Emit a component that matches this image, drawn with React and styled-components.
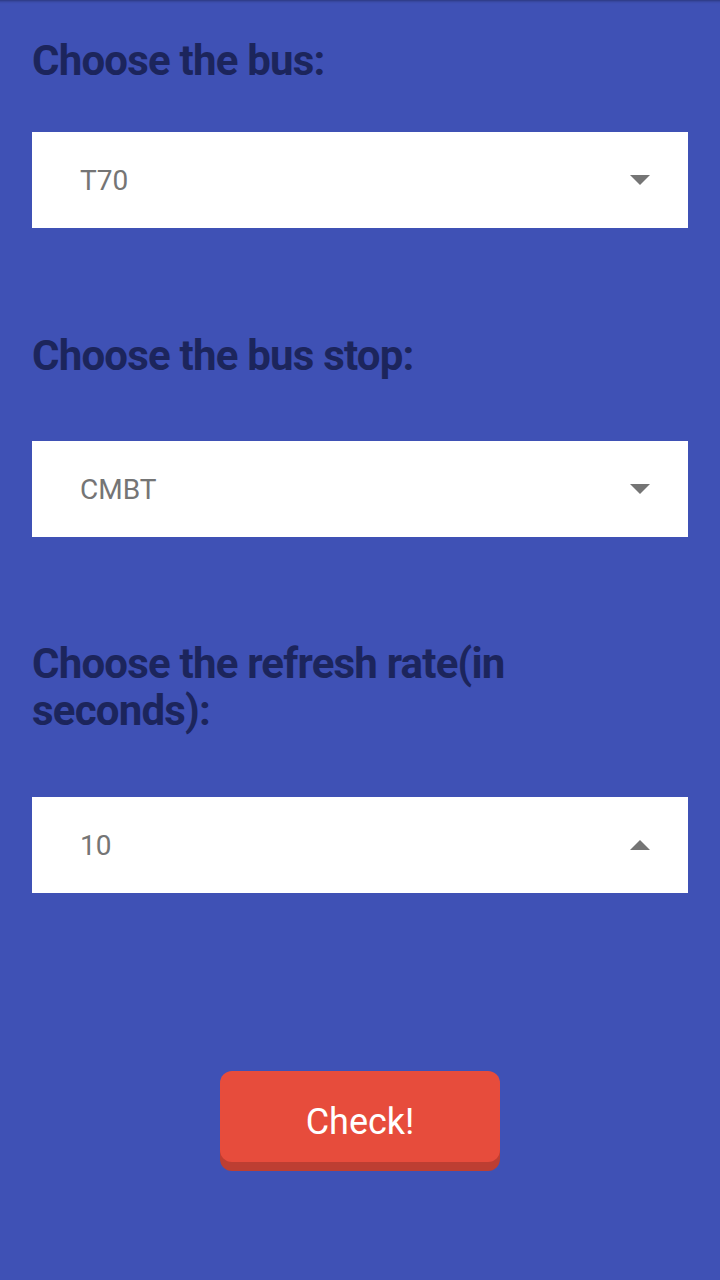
import React from "react";
import styled, { createGlobalStyle } from "styled-components";

const GlobalStyle = createGlobalStyle`
  html, body {
    margin: 0;
    padding: 0;
    background: #3f51b5;
  }
  body {
    font-family: Roboto, "Noto Sans", "Liberation Sans", sans-serif;
  }
`;

const Page = styled.div`
  width: 720px;
  min-height: 1280px;
  box-sizing: border-box;
  padding: 37px 32px 0;
  background: #3f51b5;
  box-shadow: inset 0 4px 3px -3px rgba(0, 0, 0, 0.35);
  display: flex;
  flex-direction: column;
`;

const Heading = styled.h2`
  margin: ${(p) => p.top || 0}px 0 ${(p) => p.bottom || 0}px;
  font-size: 42px;
  line-height: 47px;
  font-weight: 700;
  letter-spacing: -0.8px;
  color: #1c255c;
`;

const Select = styled.div`
  height: 96px;
  background: #fff;
  display: flex;
  align-items: center;
  justify-content: space-between;
  padding: 0 38px 0 48px;
  box-sizing: border-box;
`;

const Value = styled.span`
  font-size: 28px;
  color: #757575;
`;

const Arrow = styled.svg`
  width: 20px;
  height: 10px;
  display: block;
`;

const ButtonRow = styled.div`
  display: flex;
  justify-content: center;
  margin-top: 178px;
`;

const Button = styled.button`
  width: 280px;
  height: 91px;
  border: none;
  border-radius: 12px;
  background: #e74c3c;
  box-shadow: 0 9px 0 #bd3e32;
  color: #fff;
  font-family: Roboto, "Noto Sans", sans-serif;
  font-size: 36px;
  padding: 10px 0 0;
  cursor: pointer;
`;

const Dropdown = ({ value, open }) => (
  <Select>
    <Value>{value}</Value>
    <Arrow viewBox="0 0 20 10">
      {open ? (
        <polygon points="0,10 10,0 20,10" fill="#757575" />
      ) : (
        <polygon points="0,0 20,0 10,10" fill="#757575" />
      )}
    </Arrow>
  </Select>
);

export default function App() {
  return (
    <>
      <GlobalStyle />
      <Page>
        <Heading bottom={48}>Choose the bus:</Heading>
        <Dropdown value="T70" />
        <Heading top={104} bottom={62}>Choose the bus stop:</Heading>
        <Dropdown value="CMBT" />
        <Heading top={103} bottom={63}>
          Choose the refresh rate(in
          <br />
          seconds):
        </Heading>
        <Dropdown value="10" open />
        <ButtonRow>
          <Button>Check!</Button>
        </ButtonRow>
      </Page>
    </>
  );
}
